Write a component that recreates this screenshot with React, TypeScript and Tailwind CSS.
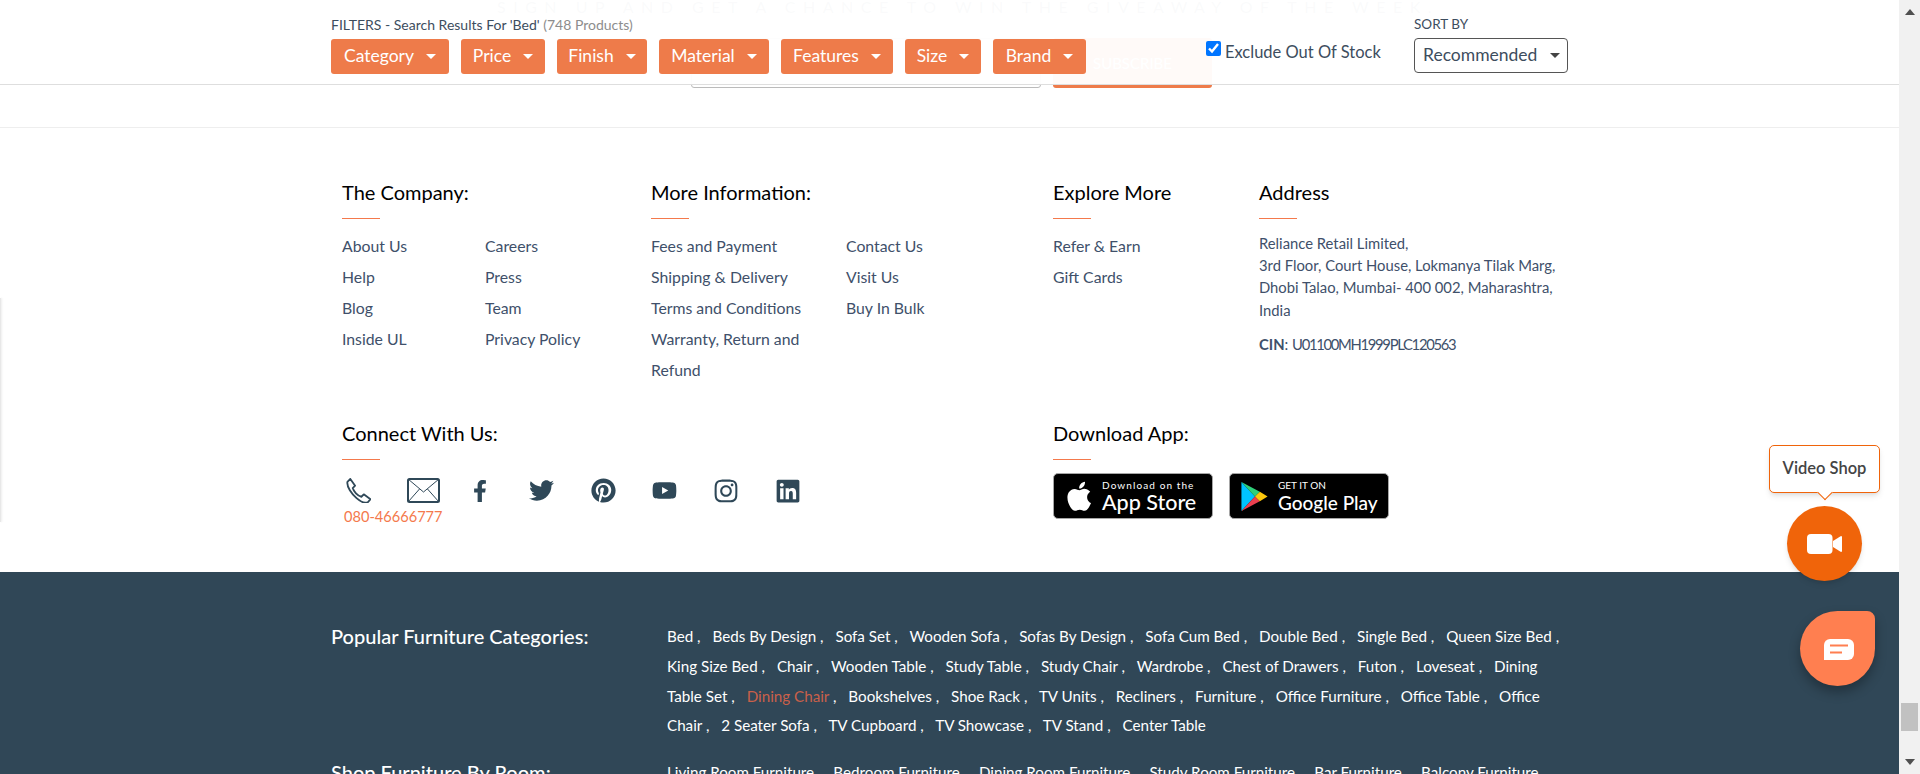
import { FaFacebookF, FaInstagram, FaLinkedin, FaPinterest, FaTwitter, FaYoutube } from "react-icons/fa"

const FONT = "font-['Lato','Noto_Sans',sans-serif]"

const filters = [
  { label: "Category", width: "w-[118px]" },
  { label: "Price", width: "w-[84px]" },
  { label: "Finish", width: "w-[90px]" },
  { label: "Material", width: "w-[110px]" },
  { label: "Features", width: "w-[112px]" },
  { label: "Size", width: "w-[76px]" },
  { label: "Brand", width: "w-[93px]" },
]

const popular = [
  "Bed", "Beds By Design", "Sofa Set", "Wooden Sofa", "Sofas By Design", "Sofa Cum Bed", "Double Bed", "Single Bed",
  "Queen Size Bed", "King Size Bed", "Chair", "Wooden Table", "Study Table", "Study Chair", "Wardrobe",
  "Chest of Drawers", "Futon", "Loveseat", "Dining Table Set", "Dining Chair", "Bookshelves", "Shoe Rack", "TV Units",
  "Recliners", "Furniture", "Office Furniture", "Office Table", "Office Chair", "2 Seater Sofa", "TV Cupboard",
  "TV Showcase", "TV Stand", "Center Table",
]

const rooms = ["Living Room Furniture", "Bedroom Furniture", "Dining Room Furniture", "Study Room Furniture", "Bar Furniture", "Balcony Furniture"]

function Heading({ children }: { children: React.ReactNode }) {
  return (
    <div>
      <h3 className="h-[26px] text-[20px] leading-[25px] font-normal text-black">{children}</h3>
      <div className="mt-[12px] h-px w-[38px] bg-[#f4794c]" />
    </div>
  )
}

function LinkList({ items, className }: { items: string[]; className: string }) {
  return (
    <ul className={className}>
      {items.map((item) => (
        <li key={item} className="h-[31px] text-[15.800px] leading-[31px] text-[#40506a]">{item}</li>
      ))}
    </ul>
  )
}

function FilterBar() {
  return (
    <div className="absolute inset-x-0 top-0 h-[85px] border-b border-[#dedede] bg-white/[0.96]">
      <div className="flex pl-[331px]">
        <div className="w-[875px]">
          <p className="mt-[16px] h-[17px] text-[14px] leading-[17px] text-[#3d4d5e]">
            FILTERS - Search Results For 'Bed' <span className="text-[#8d8d8d]">(748 Products)</span>
          </p>
          <div className="mt-[6px] flex gap-[12px]">
            {filters.map((f) => (
              <button key={f.label} className={`flex h-[35px] items-center justify-center gap-[12px] rounded-[3px] bg-[#ee7b4a] text-[17.5px] text-white ${f.width}`}>
                {f.label}
                <span className="h-0 w-0 border-x-[5px] border-t-[5px] border-x-transparent border-t-white" />
              </button>
            ))}
          </div>
        </div>
        <label className="mt-[41px] flex h-[22px] w-[208px] items-start text-[16.5px] leading-[22px] text-[#3d4d5e]">
          <input type="checkbox" defaultChecked readOnly className="mr-[4px] h-[15px] w-[15px] accent-[#0075ff]" />
          Exclude Out Of Stock
        </label>
        <div>
          <p className="mt-[16px] h-[17px] text-[13.5px] leading-[17px] text-[#3d4d5e]">SORT BY</p>
          <div className="mt-[5px] flex h-[35px] w-[154px] items-center justify-between rounded-[4px] border border-[#555] pr-[7px] pl-[8px] text-[17.5px] text-[#3d4d5e]">
            Recommended
            <span className="h-0 w-0 border-x-[5px] border-t-[5px] border-x-transparent border-t-[#444]" />
          </div>
        </div>
      </div>
    </div>
  )
}

function AppStoreBadge() {
  return (
    <div className="flex h-[46px] w-[160px] items-center rounded-[5px] border border-[#a6a6a6] bg-black pl-[13px] text-white">
      <svg viewBox="3 1 18 22" className="h-[31px] w-[26px]" fill="#fff">
        <path d="M17.05 12.54c-.03-2.6 2.12-3.85 2.22-3.91-1.21-1.77-3.09-2.01-3.76-2.04-1.6-.16-3.12.94-3.93.94-.81 0-2.06-.92-3.39-.89-1.74.03-3.35 1.01-4.25 2.57-1.81 3.14-.46 7.8 1.3 10.35.86 1.25 1.89 2.65 3.24 2.6 1.3-.05 1.79-.84 3.36-.84 1.57 0 2.01.84 3.39.81 1.4-.02 2.28-1.27 3.14-2.53.99-1.45 1.4-2.85 1.42-2.92-.03-.01-2.71-1.04-2.74-4.14zM14.46 4.9c.72-.87 1.2-2.08 1.07-3.28-1.03.04-2.28.69-3.02 1.55-.66.77-1.24 2-1.09 3.18 1.15.09 2.32-.58 3.04-1.45z" />
      </svg>
      <div className="ml-[9px]">
        <p className="text-[10px] leading-[12px] tracking-[1.1px]">Download on the</p>
        <p className="text-[21.5px] leading-[23px] font-medium">App Store</p>
      </div>
    </div>
  )
}

function GooglePlayBadge() {
  return (
    <div className="flex h-[46px] w-[160px] items-center rounded-[5px] border border-[#a6a6a6] bg-black pl-[10px] text-white">
      <svg viewBox="0 0 28 32" className="h-[31px] w-[28px]">
        <path d="M1 1v30l14-15z" fill="#00c3ff" />
        <path d="M1 1l14 15 5-5z" fill="#2fd07a" />
        <path d="M1 31l14-15 5 5z" fill="#ea4050" />
        <path d="M20 11l8 5-8 5-5-5z" fill="#fdc70c" />
      </svg>
      <div className="ml-[10px]">
        <p className="text-[10px] leading-[12px]">GET IT ON</p>
        <p className="text-[19px] leading-[23px] font-medium">Google Play</p>
      </div>
    </div>
  )
}

function SocialIcons() {
  return (
    <div className="mt-[18px] flex h-[25px] items-center text-[#2f4858]">
      <svg viewBox="0 0 26 26" className="ml-[3px] h-[25px] w-[26px]" fill="none" stroke="#2f4858" strokeWidth="1.900" strokeLinejoin="round">
        <path d="M2 4l3-3 5 7-2.500 2.500c1 3.500 5 8 9 9l2.500-2.500 7 5-2.500 3c-3 1.500-7 .5-12-4S1 9 2 4z" />
      </svg>
      <svg viewBox="0 0 33 25" className="ml-[36px] h-[25px] w-[33px]" fill="none" stroke="#2f4858">
        <rect x="1" y="1" width="31" height="23" rx="1.500" strokeWidth="2" />
        <path d="M1 1l15.500 13L32 1M1 24l11.500-13M32 24L20.500 11" strokeWidth="1" />
      </svg>
      <FaFacebookF className="ml-[33px] h-[22px] w-[14px]" />
      <FaTwitter className="ml-[42px] h-[25px] w-[25px]" />
      <FaPinterest className="ml-[37px] h-[25px] w-[25px]" />
      <FaYoutube className="ml-[36px] h-[25px] w-[25px]" />
      <FaInstagram className="ml-[36px] h-[26px] w-[26px]" />
      <FaLinkedin className="ml-[36px] h-[26px] w-[26px]" />
    </div>
  )
}

function CategoryRow({ title, items, active }: { title: string; items: string[]; active?: string }) {
  return (
    <div className="flex">
      <h4 className="w-[336px] shrink-0 text-[20px] leading-[30px] font-medium text-white">{title}</h4>
      <p className="w-[905px] pt-[1px] text-[15.200px] leading-[29.800px] text-white">
        {items.map((item, i) => (
          <span key={item}>
            <span className={item === active ? "text-[#c9604a]" : ""}>{item}</span>
            {i < items.length - 1 ? "\u00a0," : ""}
            {i < items.length - 1 ? <span className="inline-block w-[8px]" /> : null}{" "}
          </span>
        ))}
      </p>
    </div>
  )
}

export default function App() {
  return (
    <div className={`relative flex h-[774px] overflow-hidden bg-white ${FONT}`}>
      <main className="relative w-[1899px] shrink-0">
        {/* newsletter strip that scrolls under the filter bar */}
        <div className="h-[128px] border-b border-[#eeeeee]">
          <p className="pl-[497px] text-[16px] leading-[14px] tracking-[7.5px] whitespace-nowrap text-[#7b8a95]">SIGN UP AND GET A CHANCE TO WIN THE GIVEAWAY OF THE WEEK.</p>
          <div className="mt-[24px] flex pl-[691px]">
            <div className="h-[50px] w-[350px] rounded-[3px] border border-[#bbb]" />
            <div className="ml-[12px] flex h-[50px] w-[159px] items-center justify-center rounded-[3px] bg-[#ee7b4a] text-[15px] text-white">SUBSCRIBE</div>
          </div>
        </div>

        <section className="flex h-[444px] flex-col pt-[52px] pl-[342px]">
          <div className="flex h-[241px]">
            <div className="w-[309px]">
              <Heading>The Company:</Heading>
              <div className="mt-[11px] flex">
                <LinkList className="w-[143px]" items={["About Us", "Help", "Blog", "Inside UL"]} />
                <LinkList className="" items={["Careers", "Press", "Team", "Privacy Policy"]} />
              </div>
            </div>
            <div className="w-[402px]">
              <Heading>More Information:</Heading>
              <div className="mt-[11px] flex">
                <LinkList className="w-[195px]" items={["Fees and Payment", "Shipping & Delivery", "Terms and Conditions", "Warranty, Return and", "Refund"]} />
                <LinkList className="" items={["Contact Us", "Visit Us", "Buy In Bulk"]} />
              </div>
            </div>
            <div className="w-[206px]">
              <Heading>Explore More</Heading>
              <LinkList className="mt-[11px]" items={["Refer & Earn", "Gift Cards"]} />
            </div>
            <div>
              <Heading>Address</Heading>
              <p className="mt-[12.500px] text-[14.800px] leading-[22.400px] text-[#40506a]">
                Reliance Retail Limited,<br />
                3rd Floor, Court House, Lokmanya Tilak Marg,<br />
                Dhobi Talao, Mumbai- 400 002, Maharashtra,<br />
                India
              </p>
              <p className="mt-[12px] text-[14.800px] leading-[22px] text-[#40506a]"><b>CIN</b>: <span className="tracking-[-1.300px]">U01100MH1999PLC120563</span></p>
            </div>
          </div>
          <div className="flex">
            <div className="w-[711px]">
              <Heading>Connect With Us:</Heading>
              <SocialIcons />
              <p className="mt-[4px] ml-[2px] text-[14.600px] leading-[20px] text-[#f4794c]">080-46666777</p>
            </div>
            <div>
              <Heading>Download App:</Heading>
              <div className="mt-[13px] flex gap-[16px]">
                <AppStoreBadge />
                <GooglePlayBadge />
              </div>
            </div>
          </div>
        </section>

        <footer className="h-[202px] bg-[#304757] pt-[49px] pl-[331px]">
          <CategoryRow title="Popular Furniture Categories:" items={popular} active="Dining Chair" />
          <div className="mt-[16px]">
            <CategoryRow title="Shop Furniture By Room:" items={rooms} />
          </div>
        </footer>

        <FilterBar />
        {/* soft rail on the left edge */}
        <div className="absolute top-[298px] left-0 h-[224px] w-px bg-[#e8e8e8] shadow-[1px_0_2px_rgba(0,0,0,0.1)]" />

        <div className="absolute top-[445px] left-[1769px] flex h-[48px] w-[111px] items-center justify-center rounded-[5px] border border-[#f0640a] bg-white pb-[2px] text-[16.500px] font-semibold text-[#444] shadow-md">
          Video Shop
          <span className="absolute -bottom-[6px] left-1/2 h-[11px] w-[11px] -translate-x-1/2 rotate-45 border-r border-b border-[#f0640a] bg-white" />
        </div>
        <div className="absolute top-[506px] left-[1787px] flex h-[75px] w-[75px] items-center justify-center rounded-full bg-[#f0640a] shadow-md">
          <svg viewBox="0 0 35 20" className="h-[20px] w-[35px]" fill="#fff">
            <rect width="25.500" height="20" rx="4" />
            <path d="M26 7l8-5a1 1 0 0 1 1 1v14a1 1 0 0 1-1 1l-8-5z" />
          </svg>
        </div>
        <div className="absolute top-[611px] left-[1800px] flex h-[75px] w-[75px] items-center justify-center rounded-[38px] rounded-tr-[8px] bg-[#ff7f50] pt-[2px] pl-[2px] shadow-[0_6px_12px_rgba(0,0,0,0.3)]">
          <svg viewBox="0 0 30 22" className="h-[22px] w-[30px]">
            <path d="M6 0h18a6 6 0 0 1 6 6v9a6 6 0 0 1-6 6H0V6a6 6 0 0 1 6-6z" fill="#fff" />
            <path d="M6 6.500h18M6 13.500h12" stroke="#ff7f50" strokeWidth="2" />
          </svg>
        </div>
      </main>

      {/* browser scrollbar */}
      <div className="flex w-[21px] shrink-0 flex-col items-center bg-[#f1f1f1] pt-[9px] pb-[9px]">
        <span className="h-0 w-0 border-x-[5px] border-b-[6px] border-x-transparent border-b-[#505050]" />
        <span className="mt-[688px] h-[28px] w-[17px] bg-[#c1c1c1]" />
        <span className="mt-auto h-0 w-0 border-x-[5px] border-t-[6px] border-x-transparent border-t-[#505050]" />
      </div>
    </div>
  )
}
